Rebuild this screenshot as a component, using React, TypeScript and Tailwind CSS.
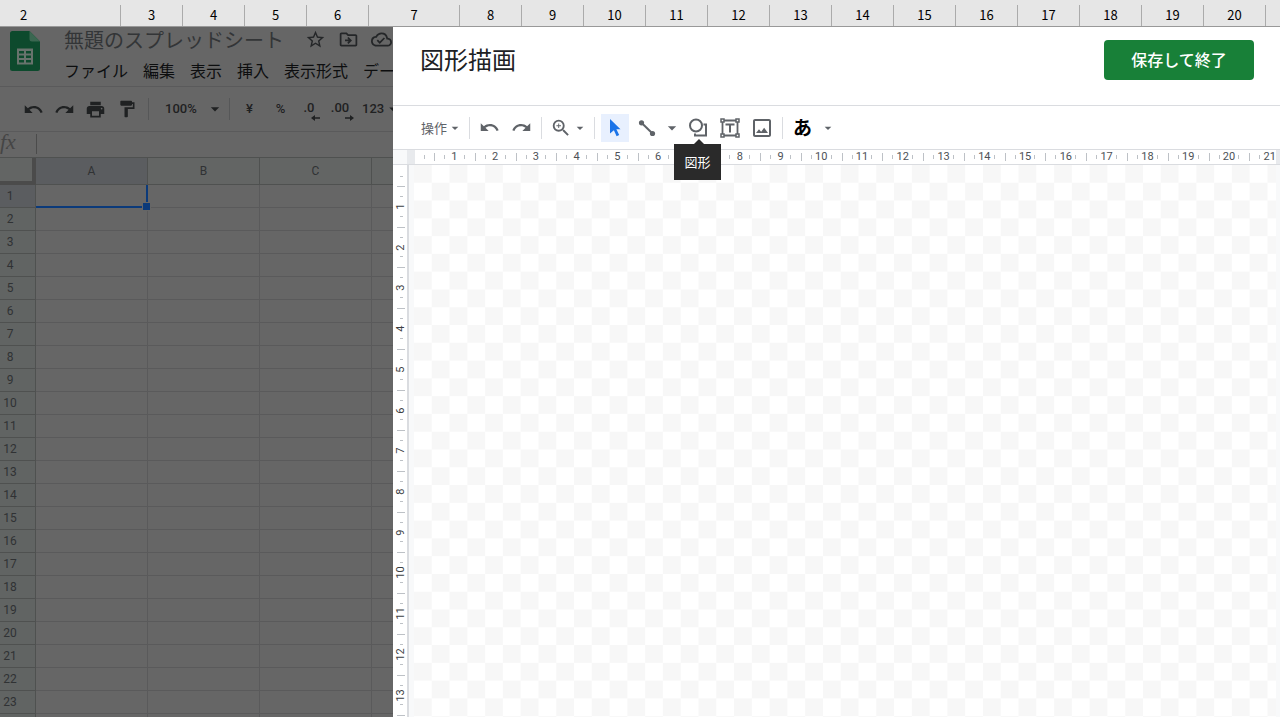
import type { ReactNode } from "react";
import {
  MdArrowDropDown,
  MdFormatPaint,
  MdOutlineCloudDone,
  MdOutlineDriveFileMove,
  MdOutlineImage,
  MdPrint,
  MdRedo,
  MdStarBorder,
  MdUndo,
  MdZoomIn,
} from "react-icons/md";

const outerColumns = [3, 4, 5, 6, 7, 8, 9, 10, 11, 12, 13, 14, 15, 16, 17, 18, 19, 20];
const menus = ["ファイル", "編集", "表示", "挿入", "表示形式", "データ"];
const sheetColumns = ["A", "B", "C", "D"];
const sheetRows = Array.from({ length: 24 }, (_, i) => i + 1);
const rulerX = Array.from({ length: 21 }, (_, i) => i + 1);
const rulerY = Array.from({ length: 14 }, (_, i) => i + 1);

function OuterHeader() {
  return (
    <div className="flex h-[27px] shrink-0 overflow-hidden border-b border-[#999999] bg-[#e6e6e6] pt-[5px] text-[13px] leading-[20px] text-black">
      <div className="w-[121px] shrink-0 border-r border-[#ababab] pr-[73px] text-center">2</div>
      {outerColumns.map((n) => (
        <div
          key={n}
          className={`shrink-0 border-r border-[#ababab] text-center ${n === 7 ? "w-[91px]" : "w-[62px]"}`}
        >
          {n}
        </div>
      ))}
    </div>
  );
}

function SheetsLogo() {
  return (
    <svg viewBox="0 0 30 40" className="h-10 w-[30px] shrink-0" aria-hidden="true">
      <path d="M2.5 0H19.5L30 10.5V37.5A2.5 2.5 0 0 1 27.5 40H2.5A2.5 2.5 0 0 1 0 37.5V2.5A2.5 2.5 0 0 1 2.5 0Z" fill="#0d4a2d" />
      <path d="M19.5 0L30 10.5H22A2.5 2.5 0 0 1 19.5 8Z" fill="#3b6751" />
      <path
        d="M7 17.5H23V33.5H7ZM9 20V22.5H14V20ZM16 20V22.5H21V20ZM9 24.5V27H14V24.5ZM16 24.5V27H21V24.5ZM9 29V31.5H14V29ZM16 29V31.5H21V29Z"
        fill="#68736d"
        fillRule="evenodd"
      />
    </svg>
  );
}

function DecimalButton({ text, label, right }: { text: string; label: string; right?: boolean }) {
  return (
    <button aria-label={label} className="flex w-[31px] shrink-0 justify-center">
      <span className="flex flex-col pt-[3px]">
        <span className="pr-[5px] leading-[14px]">{text}</span>
        <svg viewBox="0 0 9 6" className="h-[6px] w-[9px] self-end" aria-hidden="true">
          <path
            d={right ? "M0 2.2H5V0L9 3L5 6V3.8H0Z" : "M9 2.2H4V0L0 3L4 6V3.8H9Z"}
            fill="#1f2122"
          />
        </svg>
      </span>
    </button>
  );
}

function SheetToolbar() {
  return (
    <div className="flex h-[46px] shrink-0 items-center overflow-hidden border-y border-[#5a5a5b] pl-[18px] font-['Roboto',sans-serif] text-[13px] font-medium text-[#1f2122]">
      <button aria-label="元に戻す" className="flex w-[31px] shrink-0 justify-center"><MdUndo size={21} /></button>
      <button aria-label="やり直し" className="flex w-[31px] shrink-0 justify-center"><MdRedo size={21} /></button>
      <button aria-label="印刷" className="flex w-[31px] shrink-0 justify-center"><MdPrint size={21} /></button>
      <button aria-label="書式を貼り付け" className="flex w-[31px] shrink-0 justify-center"><MdFormatPaint size={20} /></button>
      <span className="ml-[6px] h-[22px] w-px shrink-0 bg-[#565758]" />
      <button aria-label="ズーム 100%" className="flex w-20 shrink-0 items-center justify-between pr-1 pl-4">
        100%
        <MdArrowDropDown size={20} />
      </button>
      <span className="h-[22px] w-px shrink-0 bg-[#565758]" />
      <button className="ml-1 w-[31px] shrink-0">¥</button>
      <button className="w-[31px] shrink-0">%</button>
      <DecimalButton text=".0" label="小数点以下の桁数を減らす" />
      <DecimalButton text=".00" label="小数点以下の桁数を増やす" right />
      <button aria-label="表示形式の詳細" className="ml-1 flex shrink-0 items-center">
        123
        <MdArrowDropDown size={18} />
      </button>
    </div>
  );
}

function SheetGrid() {
  return (
    <table className="w-[484px] table-fixed border-separate border-spacing-0 font-['Roboto',sans-serif] text-[12px] text-[#303234]">
      <thead>
        <tr className="h-[27px]">
          <th className="w-9 border-r-4 border-b-4 border-[#4b4b4b] bg-[#636564]" />
          {sheetColumns.map((c) => (
            <th
              key={c}
              className={`w-28 border-r border-b border-[#4f5150] p-0 font-normal ${c === "A" ? "bg-[#5b5d60]" : "bg-[#636564]"}`}
            >
              {c}
            </th>
          ))}
        </tr>
      </thead>
      <tbody>
        {sheetRows.map((r) => (
          <tr key={r} className="h-[23px]">
            <th
              className={`border-r border-b border-[#4f5150] p-0 pr-[15px] font-normal leading-[22px] ${r === 1 ? "bg-[#5b5d60]" : "bg-[#616463]"}`}
            >
              {r}
            </th>
            {sheetColumns.map((c) =>
              r === 1 && c === "A" ? (
                <td key={c} className="relative border-r-2 border-b-2 border-[#0b3a7a] p-0">
                  <span className="absolute -right-[5px] -bottom-[5px] size-[9px] border border-[#666666] bg-[#0b3a7a]" />
                </td>
              ) : (
                <td key={c} className="border-r border-b border-[#5a5a5b] p-0" />
              ),
            )}
          </tr>
        ))}
      </tbody>
    </table>
  );
}

function Spreadsheet() {
  return (
    <section className="flex w-[393px] shrink-0 flex-col overflow-hidden bg-[#666666]">
      <div className="flex h-[59px] shrink-0 items-start pt-1 pl-[10px]">
        <SheetsLogo />
        <div className="-mt-1 ml-6 flex shrink-0 flex-col">
          <div className="flex h-[25px] items-center text-[#242628]">
            <h1 className="w-[223px] text-[20px] leading-6 whitespace-nowrap text-[#333537]">無題のスプレッドシート</h1>
            <div className="ml-[18px] flex gap-3">
              <button aria-label="スター"><MdStarBorder size={21} /></button>
              <button aria-label="移動"><MdOutlineDriveFileMove size={21} /></button>
              <button aria-label="保存状況"><MdOutlineCloudDone size={21} /></button>
            </div>
          </div>
          <nav className="mt-[6px] flex gap-[15px] text-[16px] leading-6 whitespace-nowrap text-[#0d0e0f]">
            {menus.map((m) => (
              <button key={m}>{m}</button>
            ))}
          </nav>
        </div>
      </div>
      <SheetToolbar />
      <label className="flex h-[26px] shrink-0 items-start border-b border-[#4f5150] pt-px">
        <span className="w-9 font-['Liberation_Serif',serif] text-[22px] leading-[18px] text-[#454545] italic">fx</span>
        <span className="mt-px h-5 w-px bg-[#4b4b4b]" />
        <input aria-label="数式バー" className="min-w-0 flex-1 bg-transparent outline-none" />
      </label>
      <SheetGrid />
    </section>
  );
}

function Divider({ className }: { className: string }) {
  return <span className={`h-[22px] w-px shrink-0 bg-[#dadce0] ${className}`} />;
}

function ToolButton({ label, className, children }: { label: string; className?: string; children: ReactNode }) {
  return (
    <button
      aria-label={label}
      className={`flex h-7 shrink-0 items-center justify-center ${className ?? "ml-1 w-7"}`}
    >
      {children}
    </button>
  );
}

function CursorIcon() {
  return (
    <svg viewBox="0 0 12 18" className="h-[18px] w-3" aria-hidden="true">
      <path d="M1 0L11.5 10.3H7.4L10.2 16L7.6 17.2L4.9 11.3L1 14.6Z" fill="#1a73e8" />
    </svg>
  );
}

function LineIcon() {
  return (
    <svg viewBox="0 0 18 18" className="size-[18px]" fill="#5f6368" stroke="#5f6368" aria-hidden="true">
      <path d="M3.2 3.5L14.5 14.5" strokeWidth="2" />
      <circle cx="3.5" cy="3.8" r="2.6" stroke="none" />
      <circle cx="14.5" cy="14.5" r="2.6" stroke="none" />
    </svg>
  );
}

function ShapesIcon() {
  return (
    <svg viewBox="0 0 20 20" className="size-5" fill="none" stroke="#5f6368" strokeWidth="2" aria-hidden="true">
      <circle cx="8" cy="7.5" r="6" />
      <path d="M15.5 6.5H18V17.5H7V15.5" />
    </svg>
  );
}

function TextBoxIcon() {
  return (
    <svg viewBox="0 0 20 20" className="size-5" fill="none" stroke="#5f6368" aria-hidden="true">
      <path d="M4 2.5H16M4 17.5H16M2.5 4V16M17.5 4V16" strokeWidth="1.8" />
      <path d="M1 1H4V4H1ZM16 1H19V4H16ZM1 16H4V19H1ZM16 16H19V19H16Z" fill="#ffffff" strokeWidth="1.5" />
      <path d="M5.5 6.5H14.5M10 6.5V14.5" strokeWidth="2" />
    </svg>
  );
}

function DrawingToolbar() {
  return (
    <div className="flex h-[43px] shrink-0 items-center pl-7 text-[#5f6368]">
      <button className="flex shrink-0 items-center text-[13px] leading-[18px]">
        操作
        <MdArrowDropDown size={16} />
      </button>
      <Divider className="ml-[6px]" />
      <ToolButton label="元に戻す" className="ml-[3px] w-8"><MdUndo size={21} /></ToolButton>
      <ToolButton label="やり直し" className="w-8"><MdRedo size={21} /></ToolButton>
      <Divider className="ml-1" />
      <ToolButton label="ズーム" className="ml-2">
        <MdZoomIn size={22} />
        <MdArrowDropDown size={16} />
      </ToolButton>
      <Divider className="ml-[6px]" />
      <ToolButton label="選択" className="ml-[6px] w-7 bg-[#e8f0fe]"><CursorIcon /></ToolButton>
      <ToolButton label="線"><LineIcon /></ToolButton>
      <ToolButton label="線の種類" className="ml-px w-5"><MdArrowDropDown size={20} /></ToolButton>
      <div className="relative ml-[2px]">
        <ToolButton label="図形" className="w-7"><ShapesIcon /></ToolButton>
        <div
          role="tooltip"
          className="absolute top-[30px] -left-[10px] z-10 w-[47px] bg-[#2a2a2a] text-center text-[13px] leading-[36px] text-white"
        >
          <span className="absolute -top-[5px] left-[19px] border-x-[6px] border-b-[6px] border-x-transparent border-b-[#2a2a2a]" />
          図形
        </div>
      </div>
      <ToolButton label="テキスト ボックス"><TextBoxIcon /></ToolButton>
      <ToolButton label="画像"><MdOutlineImage size={24} /></ToolButton>
      <Divider className="ml-[6px]" />
      <button aria-label="入力ツール" className="ml-[10px] flex shrink-0 items-center text-[19px] font-bold text-black">
        あ
        <MdArrowDropDown size={16} className="ml-2 text-[#5f6368]" />
      </button>
    </div>
  );
}

function HorizontalRuler() {
  return (
    <div className="flex h-4 shrink-0 border-y border-[#dadce0] bg-white">
      <div className="w-[14px] shrink-0 bg-[#f8f9fa]" />
      <div className="w-2 shrink-0 bg-[#e8eaed]" />
      <div className="flex min-w-0 flex-1 items-center overflow-hidden">
        <span className="ml-[9px] h-1 w-px shrink-0 bg-[#bdc1c6]" />
        <div className="ml-[9px] flex w-[856px] shrink-0">
          {rulerX.map((n) => (
            <div key={n} className="flex min-w-0 flex-1 items-center">
              <span className="h-2 w-px bg-[#bdc1c6]" />
              <span className="ml-[9px] h-1 w-px bg-[#bdc1c6]" />
              <span className="flex min-w-0 flex-1 justify-center font-['Roboto',sans-serif] text-[11px] leading-[14px] text-[#4d5156]">{n}</span>
              <span className="mr-[10px] h-1 w-px bg-[#bdc1c6]" />
            </div>
          ))}
        </div>
      </div>
      <div className="w-1 shrink-0 bg-[#e8eaed]" />
    </div>
  );
}

function VerticalRuler() {
  return (
    <div className="flex w-4 shrink-0 flex-col items-center overflow-hidden border-r-2 border-[#dadce0] bg-white pl-[2px]">
      <span className="mt-[11px] h-px w-[3px] shrink-0 bg-[#bdc1c6]" />
      <div className="mt-[9px] flex h-[570px] w-full shrink-0 flex-col">
        {rulerY.map((n) => (
          <div key={n} className="flex min-h-0 flex-1 flex-col items-center">
            <span className="h-px w-2 bg-[#bdc1c6]" />
            <span className="mt-[9px] h-px w-[3px] bg-[#bdc1c6]" />
            <span className="flex min-h-0 w-[10px] flex-1 rotate-180 items-center justify-center font-['Roboto',sans-serif] text-[11px] leading-[10px] text-[#3c4043] [writing-mode:vertical-rl]">
              {n}
            </span>
            <span className="mb-[10px] h-px w-[3px] bg-[#bdc1c6]" />
          </div>
        ))}
      </div>
    </div>
  );
}

function DrawingDialog() {
  return (
    <section role="dialog" aria-labelledby="drawing-title" className="flex min-w-0 flex-1 flex-col bg-white">
      <header className="flex h-[79px] shrink-0 items-start justify-between border-b border-[#dadce0] pt-[13px] pr-[26px] pl-[27px]">
        <h2 id="drawing-title" className="text-[24px] leading-[38px] text-[#202124]">図形描画</h2>
        <button className="h-10 w-[150px] rounded bg-[#188038] pb-[2px] text-[16px] font-medium text-white">保存して終了</button>
      </header>
      <DrawingToolbar />
      <HorizontalRuler />
      <div className="flex min-h-0 flex-1 bg-[#f8f9fa] pr-1">
        <VerticalRuler />
        <svg className="ml-[5px] h-full min-w-0 flex-1" role="img" aria-label="キャンバス">
          <defs>
            <pattern id="checker" width="35.56" height="35.56" patternUnits="userSpaceOnUse">
              <rect width="35.56" height="35.56" fill="#ffffff" />
              <rect width="17.78" height="17.78" fill="#f7f7f7" />
              <rect x="17.78" y="17.78" width="17.78" height="17.78" fill="#f7f7f7" />
            </pattern>
          </defs>
          <rect width="100%" height="100%" fill="url(#checker)" />
        </svg>
      </div>
    </section>
  );
}

export default function App() {
  return (
    <div className="flex h-screen flex-col overflow-hidden font-['Noto_Sans_CJK_JP',sans-serif]">
      <OuterHeader />
      <main className="flex min-h-0 flex-1">
        <Spreadsheet />
        <DrawingDialog />
      </main>
    </div>
  );
}
